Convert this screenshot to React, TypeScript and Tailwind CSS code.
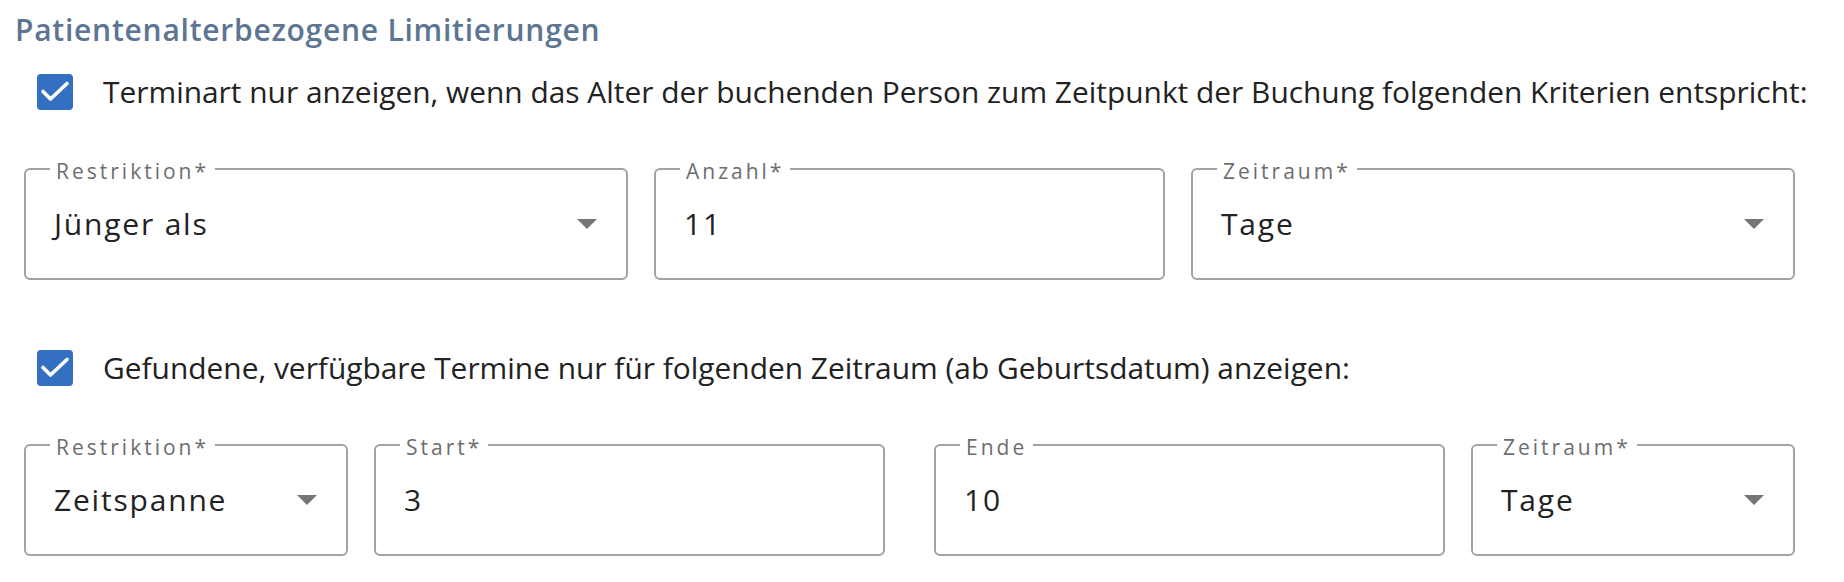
import React from "react";

function Checkbox() {
  return (
    <span className="flex items-center justify-center w-[36px] h-[36px] rounded-[4px] bg-[#3370c2] shrink-0">
      <svg width="36" height="36" viewBox="0 0 36 36" fill="none">
        <path d="M6 17.5 L13.5 25 L30 9.5" stroke="#fff" strokeWidth="3.6" strokeLinecap="round" strokeLinejoin="round" />
      </svg>
    </span>
  );
}

function Field({ label, value, select, className }: { label: string; value: string; select?: boolean; className: string }) {
  return (
    <div className={`relative h-[112px] border-2 border-[#a2a2a2] rounded-[6px] flex items-center justify-between pl-[28px] pr-[29px] ${className}`}>
      <span className="absolute left-[24px] top-[-11px] px-[6px] bg-white text-[21px] leading-[24px] tracking-[3px] text-[#6d6d6d]">
        {label}
      </span>
      <span className="text-[30px] leading-[38px] tracking-[1.8px] text-[#222]">{value}</span>
      {select && (
        <svg width="20" height="10" viewBox="0 0 20 10">
          <path d="M0 0 H20 L10 10 Z" fill="#767676" />
        </svg>
      )}
    </div>
  );
}

export default function App() {
  return (
    <div className="w-[1844px] h-[582px] bg-white pt-[10px] font-['Open_Sans',sans-serif] overflow-hidden">
      <h2 className="pl-[15px] text-[30px] leading-[40px] font-semibold tracking-[0.75px] text-[#5b7593]">
        Patientenalterbezogene Limitierungen
      </h2>

      <label className="mt-[20px] flex items-center gap-[30px] pl-[37px] h-[44px]">
        <Checkbox />
        <span className="text-[29.9px] leading-[40px] text-[#222]">
          Terminart nur anzeigen, wenn das Alter der buchenden Person zum Zeitpunkt der Buchung folgenden Kriterien entspricht:
        </span>
      </label>

      <div className="mt-[54px] ml-[24px] flex gap-[26px]">
        <Field label="Restriktion*" value="Jünger als" select className="w-[604px]" />
        <Field label="Anzahl*" value="11" className="w-[511px]" />
        <Field label="Zeitraum*" value="Tage" select className="w-[604px]" />
      </div>

      <label className="mt-[66px] flex items-center gap-[30px] pl-[37px] h-[44px]">
        <Checkbox />
        <span className="text-[29.9px] leading-[40px] text-[#222]">
          Gefundene, verfügbare Termine nur für folgenden Zeitraum (ab Geburtsdatum) anzeigen:
        </span>
      </label>

      <div className="mt-[54px] ml-[24px] flex">
        <Field label="Restriktion*" value="Zeitspanne" select className="w-[324px]" />
        <Field label="Start*" value="3" className="w-[511px] ml-[26px]" />
        <Field label="Ende" value="10" className="w-[511px] ml-[49px]" />
        <Field label="Zeitraum*" value="Tage" select className="w-[324px] ml-[26px]" />
      </div>
    </div>
  );
}
